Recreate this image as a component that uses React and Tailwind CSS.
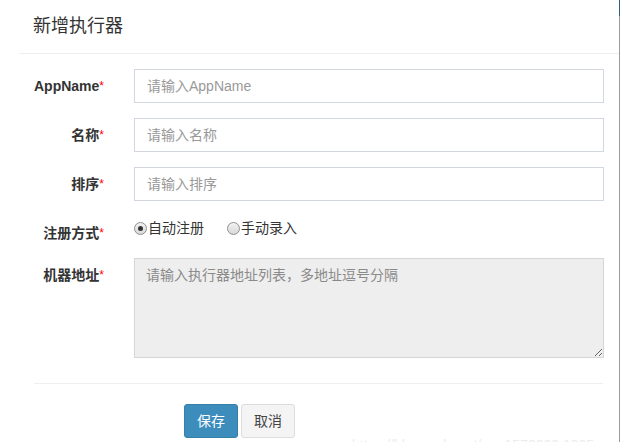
const FONT = "font-['Liberation_Sans','Noto_Sans_CJK_SC',sans-serif]";

function Label({ children }) {
  return (
    <label className="w-[85px] shrink-0 text-right text-[14px] font-bold leading-[20px] text-[#333] pt-[7px]">
      {children}
      <span className="text-[#ff0000] text-[12px] align-top font-normal">*</span>
    </label>
  );
}

function TextInput({ placeholder }) {
  return (
    <input
      type="text"
      placeholder={placeholder}
      className="w-[470px] h-[34px] border border-[#d2d6de] bg-white px-[12px] text-[14px] text-[#555] placeholder:text-[#999] outline-none"
    />
  );
}

function Radio({ checked, children }) {
  return (
    <span className="flex items-center text-[14px] leading-[20px] text-[#333]">
      <span className="w-[13px] h-[13px] rounded-full border border-[#8f8f8f] bg-gradient-to-b from-[#f2f2f2] to-[#d9d9d9] flex items-center justify-center">
        {checked && <span className="w-[5px] h-[5px] rounded-full bg-[#333]" />}
      </span>
      <span className="ml-px">{children}</span>
    </span>
  );
}

export default function App() {
  const rows = [
    { label: 'AppName', placeholder: '请输入AppName' },
    { label: '名称', placeholder: '请输入名称' },
    { label: '排序', placeholder: '请输入排序' },
  ];

  return (
    <div className={`w-[620px] h-[442px] overflow-hidden bg-white relative flex ${FONT}`}>
      <div className="w-[619px]">
        <div className="pl-[19px]">
          <div className="h-[54px] border-b border-[#eeeeee] pl-[14px] flex items-center text-[18px] text-[#333]">
            新增执行器
          </div>
        </div>

        <div className="pl-[19px] pt-[15px] flex flex-col gap-[15px]">
          {rows.map(r => (
            <div key={r.label} className="flex gap-[30px]">
              <Label>{r.label}</Label>
              <TextInput placeholder={r.placeholder} />
            </div>
          ))}

          <div className="flex gap-[30px] h-[27px]">
            <Label>注册方式</Label>
            <div className="flex gap-[23px] pt-[2px] h-fit">
              <Radio checked>自动注册</Radio>
              <Radio>手动录入</Radio>
            </div>
          </div>

          <div className="flex gap-[30px]">
            <Label>机器地址</Label>
            <textarea
              readOnly
              placeholder="请输入执行器地址列表，多地址逗号分隔"
              className="w-[470px] h-[100px] border border-[#d6d6d6] bg-[#eeeeee] px-[11px] py-[6px] text-[14px] leading-[20px] placeholder:text-[#8a8a8a] outline-none"
            />
          </div>
        </div>

        <div className="mx-[34px] mt-[25px] w-[569px] border-t border-[#eeeeee]" />

        <div className="pl-[184px] pt-[20px] flex gap-[3px]">
          <button className="w-[54px] h-[34px] rounded-[3px] border border-[#367fa9] bg-[#3c8dbc] text-white text-[14px]">
            保存
          </button>
          <button className="w-[54px] h-[34px] rounded-[3px] border border-[#dddddd] bg-[#f4f4f4] text-[#444] text-[14px]">
            取消
          </button>
        </div>
      </div>

      <div className="w-px flex flex-col">
        <div className="h-[16px] bg-[#2f5f7f]" />
        <div className="flex-1 bg-[#9a9a9a]" />
      </div>

      <div className="absolute left-[352px] top-[435px] text-[14px] text-[#ececec] whitespace-nowrap">
        https://blog.csdn.net/qq_1570000 1005
      </div>
    </div>
  );
}
